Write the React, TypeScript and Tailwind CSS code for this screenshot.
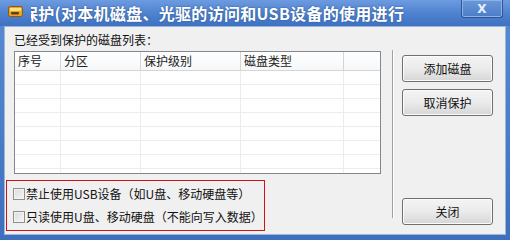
const CN = "font-['Noto_Sans_CJK_SC','Liberation_Sans',sans-serif]";

const COLS = [46, 80, 100, 103];
const HEADERS = ["序号", "分区", "保护级别", "磁盘类型"];

function AppIcon() {
  return (
    <svg width="15" height="11" viewBox="0 0 15 11" className="shrink-0">
      <rect x="0.5" y="0.5" width="14" height="10" rx="2" fill="#e8a526" stroke="#8a5a10" />
      <rect x="2" y="2" width="11" height="3" fill="#fbe08a" />
      <rect x="3" y="6" width="8" height="2.5" rx="1" fill="#6a3f0c" />
    </svg>
  );
}

function Button({ label, className = "" }: { label: string; className?: string }) {
  return (
    <button
      type="button"
      className={[
        "flex h-[27px] w-[91px] items-center justify-center rounded-[3px] border border-[#707070] bg-gradient-to-b from-[#f4f4f4] via-[#ebebeb] to-[#d6d6d6] text-[12px] text-[#111]",
        "shadow-[inset_0_0_0_1px_#fbfbfb]",
        className,
      ].join(" ")}
    >
      {label}
    </button>
  );
}

function Check({ label }: { label: string }) {
  return (
    <label className="flex h-[23px] items-center">
      <span className="ml-[6px] h-[12px] w-[12px] shrink-0 border border-[#8e8f8f] bg-gradient-to-br from-[#dcdcdc] to-[#f6f6f6] shadow-[inset_0_0_0_1px_#f4f4f4]" />
      <span className="ml-[1px] text-[12px] leading-none text-[#111]">{label}</span>
    </label>
  );
}

export default function App() {
  return (
    <div className={`${CN} flex h-[240px] w-[510px] flex-col overflow-hidden bg-gradient-to-b from-[#5a8cd4] to-[#3d6fbd]`}>
      {/* title bar */}
      <div className="relative flex h-[26px] shrink-0 items-center bg-gradient-to-b from-[#6d9be0] via-[#4f83cf] to-[#3e72c2]">
        <div className="ml-[8px] mt-[-4px]">
          <AppIcon />
        </div>
        <div className="ml-[8px] flex-1 overflow-hidden whitespace-nowrap">
          <span className="ml-[-9px] text-[16px] font-bold tracking-[0.3px] text-white [text-shadow:0_0_2px_#2a4f8a]">
            保护(对本机磁盘、光驱的访问和USB设备的使用进行
          </span>
        </div>
        <div className="absolute right-[7px] top-0 flex h-[18px] w-[42px] items-center justify-center rounded-b-[3px] border border-t-0 border-[#2c5594] bg-gradient-to-b from-[#6b98d8] to-[#4a7cc6] shadow-[inset_0_0_0_1px_#8db2e6]">
          <span className="font-['DejaVu_Sans',sans-serif] text-[12px] font-bold leading-none text-[#e8f0fb]">X</span>
        </div>
      </div>

      {/* client area */}
      <div className="mx-[4px] mb-[5px] flex flex-1 border border-[#9cb6dc] bg-[#f0f0f0]">
        <div className="flex w-[375px] flex-col pl-[1px]">
          <div className="ml-[8px] mt-[5px] h-[16px] text-[12px] leading-[16px] text-[#111]">已经受到保护的磁盘列表：</div>
          <div className="ml-[8px] mt-[3px] h-[123px] w-[367px] overflow-hidden border border-[#828790] bg-white">
            <div className="flex h-[19px] border-b border-[#d5d5d5] bg-gradient-to-b from-white to-[#f6f7f9]">
              {HEADERS.map((h, i) => (
                <div
                  key={h}
                  style={{ width: COLS[i] }}
                  className="border-r border-[#d5d5d5] pl-[3px] text-[12px] leading-[18px] text-[#222]"
                >
                  {h}
                </div>
              ))}
              <div className="flex-1" />
            </div>
            {Array.from({ length: 8 }).map((_, r) => (
              <div key={r} className="flex h-[14px] border-b border-[#ececec]">
                {COLS.map((w, i) => (
                  <div key={i} style={{ width: w }} className="border-r border-[#ececec]" />
                ))}
              </div>
            ))}
          </div>
          <div className="mt-[6px] flex h-[51px] w-[259px] flex-col border border-[#d0121a] pt-[1px]">
            <Check label="禁止使用USB设备（如U盘、移动硬盘等）" />
            <Check label="只读使用U盘、移动硬盘（不能向写入数据）" />
          </div>
        </div>

        <div className="ml-[12px] mt-[23px] h-[168px] w-[2px] border-l border-r border-l-[#a0a0a0] border-r-white" />

        <div className="ml-[8px] flex flex-col pb-[9px] pt-[28px]">
          <Button label="添加磁盘" />
          <Button label="取消保护" className="mt-[7px]" />
          <Button label="关闭" className="mt-auto" />
        </div>
      </div>
    </div>
  );
}
